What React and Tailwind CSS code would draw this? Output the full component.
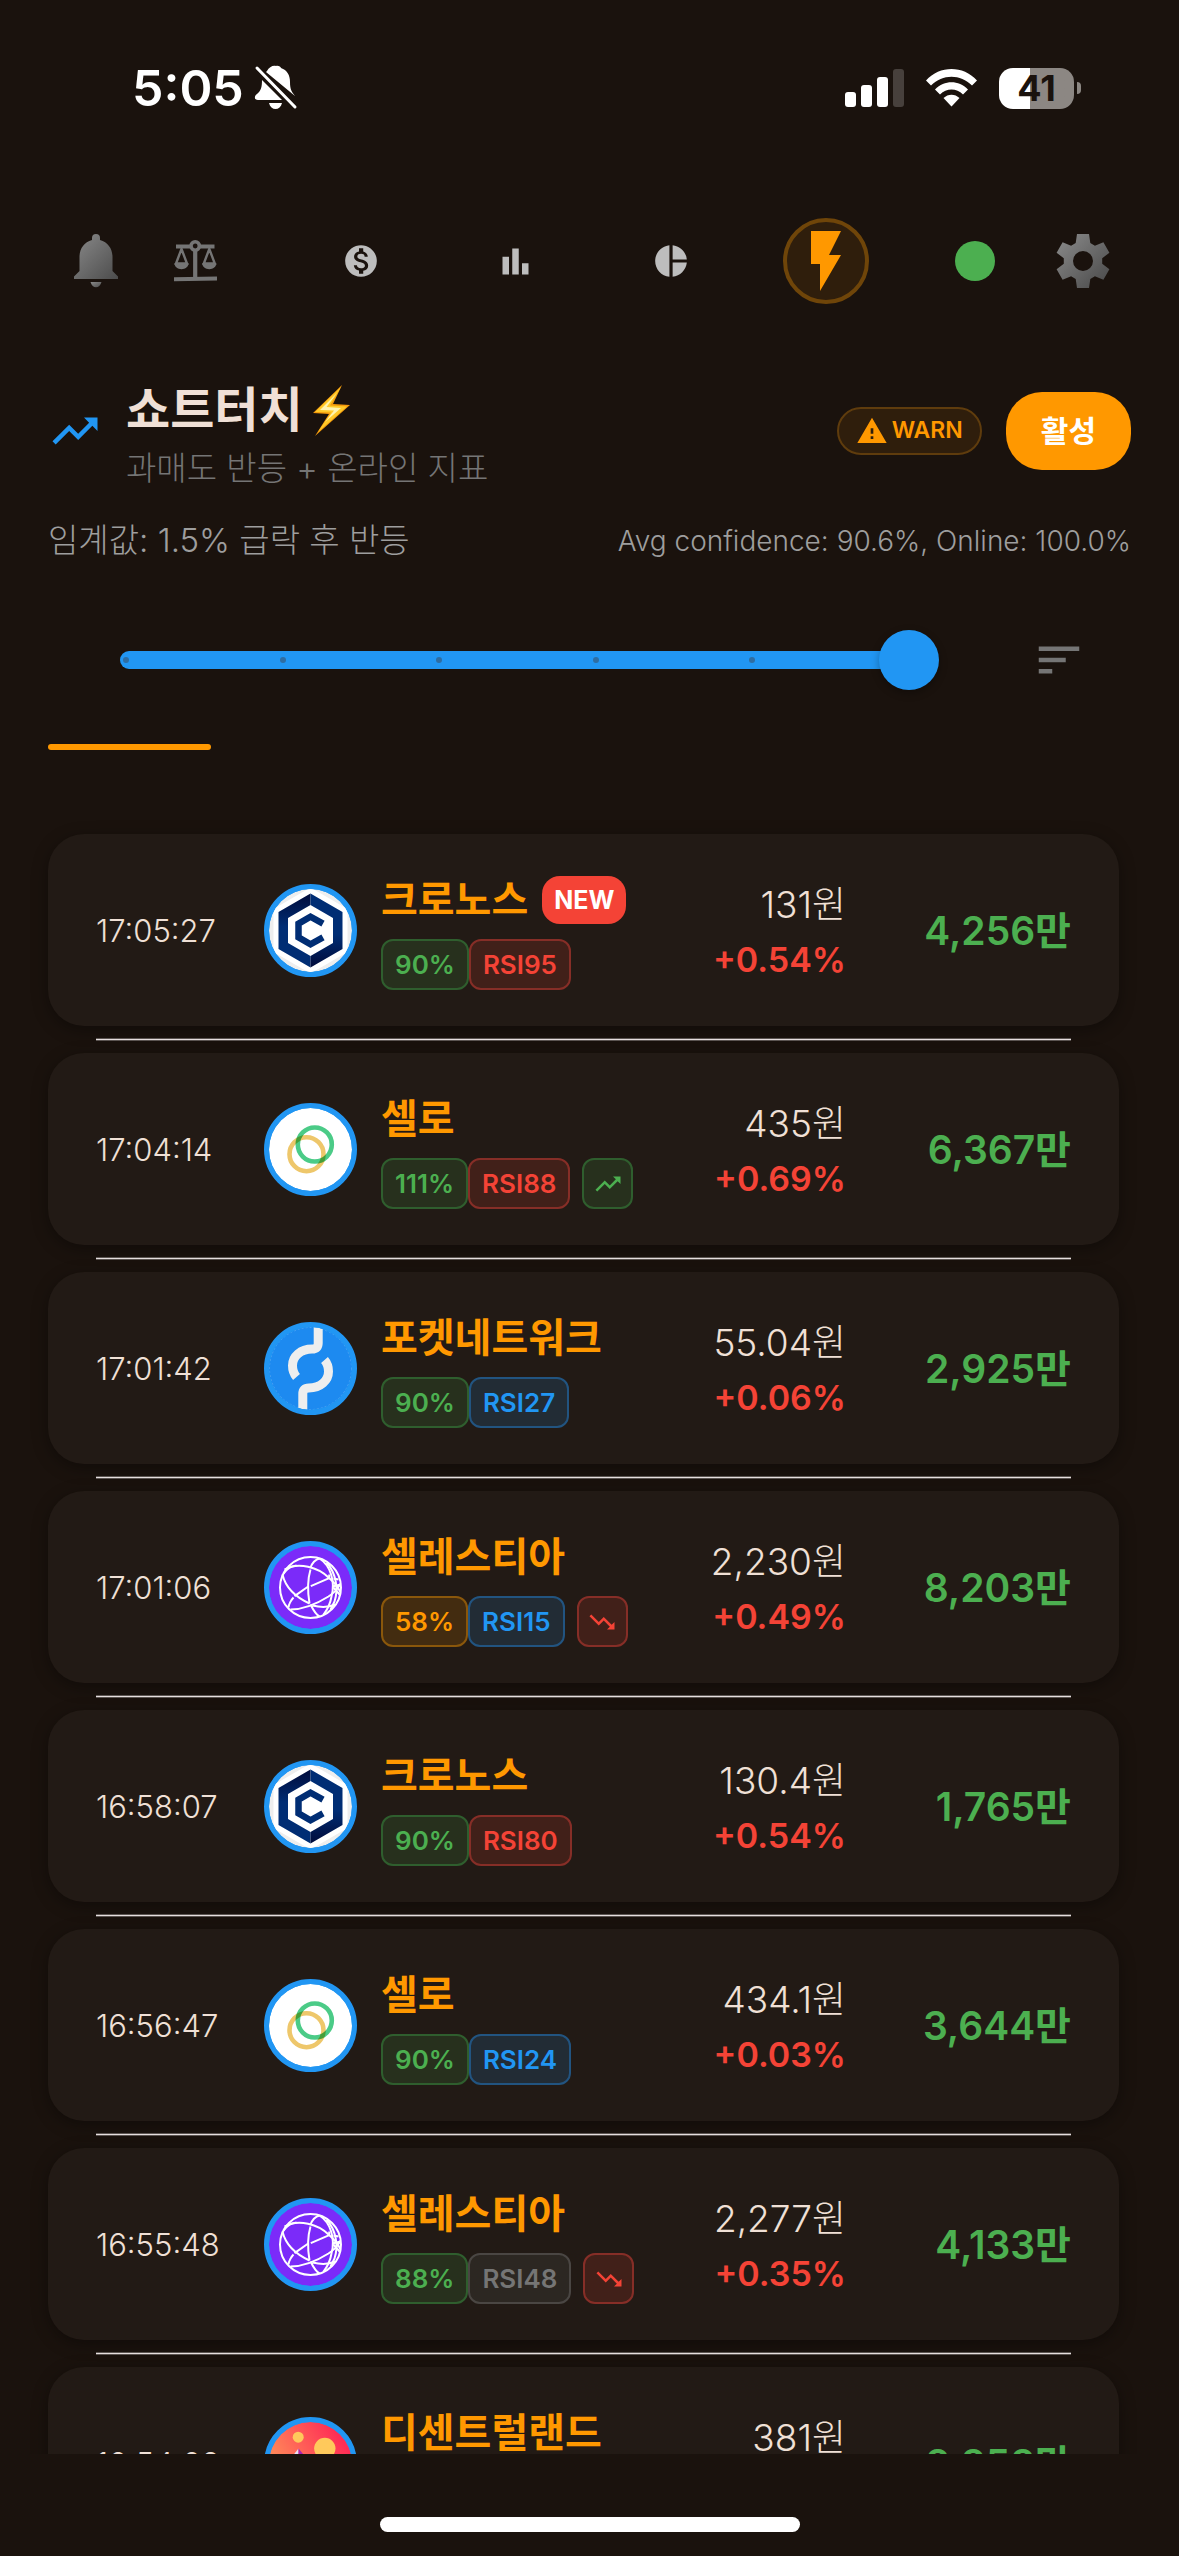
import { useState } from "react";
import {
  MdBarChart,
  MdFlashOn,
  MdMonetizationOn,
  MdPieChart,
  MdSort,
  MdTrendingDown,
  MdTrendingUp,
  MdWarning,
} from "react-icons/md";

const TONES = {
  green: "bg-[#27301d] border-[#2f5e2e] text-[#4caf50]",
  red: "bg-[#412019] border-[#862e27] text-[#f44336]",
  blue: "bg-[#222c35] border-[#225480] text-[#2196f3]",
  orange: "bg-[#432c10] border-[#8a570b] text-[#ff9800]",
  gray: "bg-[#2c2722] border-[#4a4643] text-[#757575]",
};

const SIGNALS = [
  { time: "17:05:27", coin: "cronos", name: "크로노스", isNew: true, conf: "90%", confTone: "green", rsi: "RSI95", rsiTone: "red", price: "131원", change: "+0.54%", volume: "4,256만" },
  { time: "17:04:14", coin: "celo", name: "셀로", conf: "111%", confTone: "green", rsi: "RSI88", rsiTone: "red", trend: "up", price: "435원", change: "+0.69%", volume: "6,367만" },
  { time: "17:01:42", coin: "pocket", name: "포켓네트워크", conf: "90%", confTone: "green", rsi: "RSI27", rsiTone: "blue", price: "55.04원", change: "+0.06%", volume: "2,925만" },
  { time: "17:01:06", coin: "celestia", name: "셀레스티아", conf: "58%", confTone: "orange", rsi: "RSI15", rsiTone: "blue", trend: "down", price: "2,230원", change: "+0.49%", volume: "8,203만" },
  { time: "16:58:07", coin: "cronos", name: "크로노스", conf: "90%", confTone: "green", rsi: "RSI80", rsiTone: "red", price: "130.4원", change: "+0.54%", volume: "1,765만" },
  { time: "16:56:47", coin: "celo", name: "셀로", conf: "90%", confTone: "green", rsi: "RSI24", rsiTone: "blue", price: "434.1원", change: "+0.03%", volume: "3,644만" },
  { time: "16:55:48", coin: "celestia", name: "셀레스티아", conf: "88%", confTone: "green", rsi: "RSI48", rsiTone: "gray", trend: "down", price: "2,277원", change: "+0.35%", volume: "4,133만" },
  { time: "16:54:09", coin: "mana", name: "디센트럴랜드", price: "381원", volume: "8,858만" },
];

function StatusBar() {
  return (
    <div className="flex h-44 items-center justify-between pl-[132px] pr-[98px]">
      <div className="flex items-center gap-2.5">
        <span className="text-[50px] leading-none font-semibold text-white">5:05</span>
        <svg width="44" height="46" viewBox="0 0 44 46" fill="#fff" aria-label="무음">
          <path d="M13 6C15 2 19 0 22 1c2-1 5 1 5 2 6 2 9 7 9 14 0 8 2 10 5 14L12 7Z" />
          <path d="M8 15 28 35H4c-4 0-4-4-1-6 4-3 5-7 5-14Z" />
          <path d="M15 38h13c-1 4-3.500 6-6.500 6S16 42 15 38Z" />
          <path d="M3 3 41 42" stroke="#fff" strokeWidth="3" strokeLinecap="round" />
        </svg>
      </div>
      <div className="flex items-center gap-[22px]">
        <svg width="59" height="38" viewBox="0 0 59 38" fill="#fff" aria-label="신호">
          <rect x="0" y="23" width="11" height="15" rx="3" />
          <rect x="16" y="16" width="11" height="22" rx="3" />
          <rect x="32" y="8" width="11" height="30" rx="3" />
          <rect x="48" y="0" width="11" height="38" rx="3" fill="#47403c" />
        </svg>
        <svg width="51" height="38" viewBox="0 0 51 38" fill="#fff" aria-label="Wi-Fi">
          <path d="M0 11.500C14-3.800 37-3.800 51 11.500L46 16.500C34.500 4.700 16.500 4.700 5 16.500Z" />
          <path d="M9 20.500C18.500 10.800 32.500 10.800 42 20.500L37 25.500C30.500 18.900 20.500 18.900 14 25.500Z" />
          <path d="M17.500 29C22 24.500 29 24.500 33.500 29L25.500 37.500Z" />
        </svg>
        <div className="flex items-center gap-[3px]">
          <div className="flex h-[41px] w-[75px] items-center justify-center rounded-[14px] bg-linear-to-r from-white from-41% to-[#8c8783] to-41% text-[36px] leading-none font-bold text-[#1a120d]">
            41
          </div>
          <div className="h-3 w-1 rounded-r-full bg-[#8c8783]" />
        </div>
      </div>
    </div>
  );
}

function BellIcon() {
  return (
    <svg width="44" height="54" viewBox="0 0 44 54">
      <defs>
        <linearGradient id="bell-fill" x1="0" y1="0" x2="1" y2="1">
          <stop offset="0" stopColor="#8a8a8a" />
          <stop offset="1" stopColor="#4c4c4c" />
        </linearGradient>
      </defs>
      <g fill="url(#bell-fill)">
        <path d="M18 6V4a4 4 0 0 1 8 0v2C34 8 38.500 15 38.500 23V37L44 42.500V45H0V42.500L5.500 37V23C5.500 15 10 8 18 6Z" />
        <path d="M16.500 48h11c-1 3.500-3 5.300-5.500 5.300S17.500 51.500 16.500 48Z" />
      </g>
    </svg>
  );
}

function ScaleIcon() {
  return (
    <svg width="43" height="42" viewBox="0 0 43 42" fill="none" stroke="#757575">
      <path d="M2 6.500h14M26 6.500h14.500" strokeWidth="4" />
      <circle cx="21.200" cy="6" r="4.200" strokeWidth="3.600" />
      <path d="M21.200 11v26" strokeWidth="4.200" />
      <path d="M0 39.200 43 38.500" strokeWidth="4" />
      <path d="M7.500 9 2 23.500h11Z M35.300 9 29.800 23.500h11Z" strokeWidth="2.400" />
      <path d="M.5 23h14c0 4-3.200 6.200-7 6.200S.5 27 .5 23ZM28.300 23h14c0 4-3.200 6.200-7 6.200s-7-2.200-7-6.200Z" fill="#757575" stroke="none" />
    </svg>
  );
}

function GearIcon() {
  return (
    <svg width="54" height="54" viewBox="-27 -27 54 54">
      <defs>
        <linearGradient id="gear-fill" x1="0" y1="0" x2="1" y2="1">
          <stop offset="0" stopColor="#8c8c8c" />
          <stop offset="1" stopColor="#484848" />
        </linearGradient>
      </defs>
      <path
        fill="url(#gear-fill)"
        fillRule="evenodd"
        d="M-7.300-18-6-27H6L7.300-18 11.900-15.300 20.400-18.700 26.400-8.300 19.200-2.700V2.700L26.400 8.300 20.400 18.700 11.900 15.300 7.300 18 6 27H-6L-7.300 18-11.900 15.300-20.400 18.700-26.400 8.300-19.200 2.700V-2.700L-26.400-8.300-20.400-18.700-11.900-15.300ZM-10 0a10 10 0 1 0 20 0 10 10 0 1 0-20 0Z"
      />
    </svg>
  );
}

function TopNav() {
  return (
    <nav className="flex h-[170px] items-center justify-between pl-[74px] pr-[69px]">
      <div className="flex items-center gap-14">
        <button aria-label="알림"><BellIcon /></button>
        <button aria-label="비교"><ScaleIcon /></button>
      </div>
      <div className="flex items-center pl-3.5">
        <button aria-label="자산" className="flex w-[155px] justify-center text-[#bdbdbd]"><MdMonetizationOn size={38} /></button>
        <button aria-label="차트" className="flex w-[155px] justify-center text-[#bdbdbd]"><MdBarChart size={39} /></button>
        <button aria-label="비중" className="flex w-[155px] justify-center text-[#bdbdbd]"><MdPieChart size={38} /></button>
        <div className="flex w-[155px] justify-center">
          <button aria-label="쇼트터치" className="flex size-[86px] items-center justify-center rounded-full border-4 border-[#6f4509] bg-[#2f1e0c] text-[#ff9800]">
            <MdFlashOn size={72} />
          </button>
        </div>
      </div>
      <div className="flex items-center gap-[61px]">
        <span className="size-10 rounded-full bg-[#4caf50]" />
        <button aria-label="설정"><GearIcon /></button>
      </div>
    </nav>
  );
}

function BoltEmoji() {
  return (
    <svg width="37" height="51" viewBox="0 0 37 51" aria-label="번개">
      <path d="M29 0 0 28 16 29 2 51 37 20 20 19Z" fill="#f59a0b" />
      <path d="M28 2 2 27 18 27.500 5 47 34 21.500 17 20.500Z" fill="#ffc928" />
      <path d="M24 8 7 25 21 25.500 12 37 28 23 13.500 22Z" fill="#fff3b0" />
    </svg>
  );
}

function Header() {
  return (
    <header className="flex items-center justify-between">
      <div className="flex items-center gap-6">
        <MdTrendingUp size={54} className="text-[#2196f3]" />
        <div className="pt-[9px]">
          <h1 className="flex items-center gap-2.5 text-[48px] leading-[66px] font-bold text-[#f0e0d6]">
            쇼트터치
            <BoltEmoji />
          </h1>
          <p className="text-[33px] leading-[50px] font-light text-[#757575]">과매도 반등 + 온라인 지표</p>
        </div>
      </div>
      <div className="flex items-center gap-6">
        <span className="flex h-12 items-center gap-1 rounded-full border-2 border-[#5f3c0d] bg-[#2f1e0c] px-[17px] text-[23px] leading-none font-semibold text-[#ff9800]">
          <MdWarning size={32} />
          WARN
        </span>
        <button className="h-[78px] rounded-[36px] bg-[#ff9800] px-[35px] text-[30px] leading-none font-bold text-white">
          활성
        </button>
      </div>
    </header>
  );
}

function ThresholdSlider() {
  const [value, setValue] = useState(5);
  return (
    <div className="flex items-center pl-12 pr-[45px]">
      <div className="relative flex h-[60px] flex-1 items-center">
        <div className="absolute inset-x-6 flex h-[18px] items-center justify-between rounded-full bg-[#2196f3] px-[3px]">
          {[0, 1, 2, 3, 4, 5].map((n) => (
            <span key={n} className="size-1.5 rounded-full bg-[#2e6da3]" />
          ))}
        </div>
        <input
          type="range"
          aria-label="임계값"
          min="0"
          max="5"
          value={value}
          onChange={(e) => setValue(Number(e.target.value))}
          className="relative h-[60px] w-full appearance-none bg-transparent [&::-webkit-slider-thumb]:size-[60px] [&::-webkit-slider-thumb]:appearance-none [&::-webkit-slider-thumb]:rounded-full [&::-webkit-slider-thumb]:bg-[#2196f3] [&::-webkit-slider-thumb]:shadow-[0_3px_8px_rgba(0,0,0,0.3)]"
        />
      </div>
      <button aria-label="정렬" className="ml-[93px] text-[#757575]">
        <MdSort size={54} />
      </button>
    </div>
  );
}

function CoinArt({ coin }) {
  if (coin === "cronos") {
    return (
      <>
        <defs>
          <linearGradient id="cro-left" x1="0" y1="0" x2="0" y2="1">
            <stop offset="0" stopColor="#010b3a" />
            <stop offset=".45" stopColor="#002d74" />
            <stop offset="1" stopColor="#002d74" />
          </linearGradient>
          <linearGradient id="cro-right" x1="0" y1="0" x2="0" y2="1">
            <stop offset="0" stopColor="#002d74" />
            <stop offset=".55" stopColor="#002d74" />
            <stop offset="1" stopColor="#010b3a" />
          </linearGradient>
        </defs>
        <rect x="-47" y="-47" width="94" height="94" fill="#eee" />
        <path d="M0-43 37-21.500V21.500L0 43-37 21.500V-21.500Z" fill="#fff" />
        <path d="M0-37V-25.500L-22.500-12.500V12.500L0 25.500V37L-32 18.500V-18.500Z" fill="url(#cro-left)" />
        <path d="M0-37V-25.500L22.500-12.500V12.500L0 25.500V37L32 18.500V-18.500Z" fill="url(#cro-right)" />
        <path d="M12.500-6.800 0-13.800-12-6.800V6.800L0 13.800 12.500 6.800" fill="none" stroke="#002d74" strokeWidth="6.500" />
      </>
    );
  }
  if (coin === "celo") {
    return (
      <>
        <rect x="-47" y="-47" width="94" height="94" fill="#fff" />
        <g fill="none" strokeWidth="4.600">
          <circle cx="-4" cy="4.700" r="17" stroke="#eec76b" />
          <circle cx="4.300" cy="-5" r="17" stroke="#4bcb87" className="mix-blend-multiply" />
        </g>
      </>
    );
  }
  if (coin === "pocket") {
    return (
      <>
        <rect x="-47" y="-47" width="94" height="94" fill="#1d8af0" />
        <circle r="41" fill="none" stroke="#6fb6f5" strokeWidth=".6" strokeDasharray="2 2" />
        <g fill="none" stroke="#eee" strokeWidth="9">
          <path d="M7.700-42V-25.500Q7.700-19.500 1.700-19.500C-10-19.500-18-12-18-3-18 2-17 5-14 8.500" />
          <path d="M-7.700 42V25.500Q-7.700 19.500-1.700 19.500C10 19.500 18 12 18 3 18-2 17-5 14-8.500" />
        </g>
      </>
    );
  }
  if (coin === "celestia") {
    return (
      <>
        <rect x="-47" y="-47" width="94" height="94" fill="#7b2bf9" />
        <g fill="none" stroke="#fff" strokeWidth="2">
          <circle r="30.500" />
          <path d="M-26-18C-12-26 8-20 18-10 25-4 28 0 30 5" />
          <path d="M-28-13C-25 0-14 10-1 16M-27-14C-22-20-20-21-14-22" />
          <path d="M0-18C-3-8-3 4-1 16" />
          <path d="M0-20C2-25 5-28 9-29" />
          <path d="M.3-1.300 18.700-9.300V-13" />
          <path d="M9-29C20-22 25-6 21 9 20 15 17 22 13 27" />
          <path d="M16-25C26-14 28 2 24 14L20 22" />
          <path d="M-22 20C-22 17-19 12-17 10M-16 8.600-2.300-1" />
          <path d="M-20 22C-4 22 10 14 18 9 24 5 28 1 30-4" />
          <path d="M0 17C3 23 5 27 9 29M2 18C10 20 18 20 25 17M23-9 28-8M22-1 30-3M23 0 29 7" />
        </g>
      </>
    );
  }
  return (
    <>
      <defs>
        <linearGradient id="mana-sky" x1="0" y1=".7" x2=".8" y2=".2">
          <stop offset="0" stopColor="#ffa55a" />
          <stop offset="1" stopColor="#ff2d55" />
        </linearGradient>
      </defs>
      <rect x="-47" y="-47" width="94" height="94" fill="url(#mana-sky)" />
      <circle cx="-12.300" cy="-26.300" r="5.500" fill="#ffc95b" />
      <circle cx="14.300" cy="-15" r="10.700" fill="#ffc95b" />
      <path d="M-12-15V21H-40Z" fill="#e9dff2" />
      <path d="M-12-15V21H18Z" fill="#a524b3" />
    </>
  );
}

function CoinLogo({ coin }) {
  return (
    <span className="size-[93px] shrink-0 overflow-hidden rounded-full border-[5px] border-[#2196f3] bg-[#2196f3]">
      <svg viewBox="-41.500 -41.500 83 83" className="isolate size-full overflow-hidden rounded-full" aria-hidden="true">
        <CoinArt coin={coin} />
      </svg>
    </span>
  );
}

function Chip({ tone, children }) {
  return (
    <span className={"flex h-[51px] items-center rounded-xl border-2 px-3 text-[26px] leading-none font-semibold " + TONES[tone]}>
      {children}
    </span>
  );
}

function SignalCard({ signal }) {
  return (
    <article className="flex h-48 items-center rounded-[36px] bg-[#221a15] px-12 shadow-[0_4px_16px_rgba(0,0,0,0.35)]">
      <time className="w-[168px] shrink-0 text-[31px] leading-none font-light text-[#f0e0d6]">{signal.time}</time>
      <CoinLogo coin={signal.coin} />
      <div className="ml-6 flex flex-1 flex-col gap-[15px] pt-1.5">
        <div className="flex h-12 items-center gap-3.5">
          <h2 className="text-[40px] leading-none font-bold whitespace-nowrap text-[#ff9800]">{signal.name}</h2>
          {signal.isNew && (
            <span className="flex h-12 items-center rounded-[18px] bg-[#f44336] px-3 text-[25px] leading-none font-bold text-white">NEW</span>
          )}
        </div>
        <div className="flex h-[51px]">
          {signal.conf && <Chip tone={signal.confTone}>{signal.conf}</Chip>}
          {signal.rsi && <Chip tone={signal.rsiTone}>{signal.rsi}</Chip>}
          {signal.trend && (
            <span className={"ml-3 flex size-[51px] items-center justify-center rounded-xl border-2 " + TONES[signal.trend === "up" ? "green" : "red"]}>
              {signal.trend === "up" ? <MdTrendingUp size={30} /> : <MdTrendingDown size={30} />}
            </span>
          )}
        </div>
      </div>
      <div className="h-[110px] pt-0.5 text-right leading-[55px] whitespace-nowrap">
        <p className="text-[37px] font-light text-[#f0e0d6]">{signal.price}</p>
        <p className="text-[34px] font-semibold text-[#f44336]">{signal.change}</p>
      </div>
      <p className="w-[225px] shrink-0 text-right text-[39px] leading-none font-semibold whitespace-nowrap text-[#4caf50]">{signal.volume}</p>
    </article>
  );
}

export default function App() {
  return (
    <div className="flex h-screen flex-col overflow-hidden bg-[#1a120d] font-['Inter','Noto_Sans_CJK_KR',sans-serif]">
      <StatusBar />
      <TopNav />
      <section className="px-12 pt-[22px]">
        <Header />
        <div className="mt-6 flex h-12 items-center justify-between font-light text-[#9e9e9e]">
          <p className="text-[33px]">임계값: 1.5% 급락 후 반등</p>
          <p className="text-[28px]">Avg confidence: 90.6%, Online: 100.0%</p>
        </div>
        <div className="mt-[65px]">
          <ThresholdSlider />
        </div>
        <div className="mt-[54px] h-1.5 w-[163px] rounded-full bg-[#ff9800]" />
      </section>
      <main className="min-h-0 flex-1 overflow-hidden pt-[84px] pr-[60px] pl-12">
        {SIGNALS.map((signal, i) => (
          <div key={signal.time}>
            {i > 0 && <hr className="mx-12 my-3 h-[3px] border-y border-[#5c5552] bg-[#e6dfdf]" />}
            <SignalCard signal={signal} />
          </div>
        ))}
      </main>
      <footer className="flex h-[102px] shrink-0 justify-center pt-[63px]">
        <div className="h-[15px] w-[420px] rounded-full bg-white" />
      </footer>
    </div>
  );
}
